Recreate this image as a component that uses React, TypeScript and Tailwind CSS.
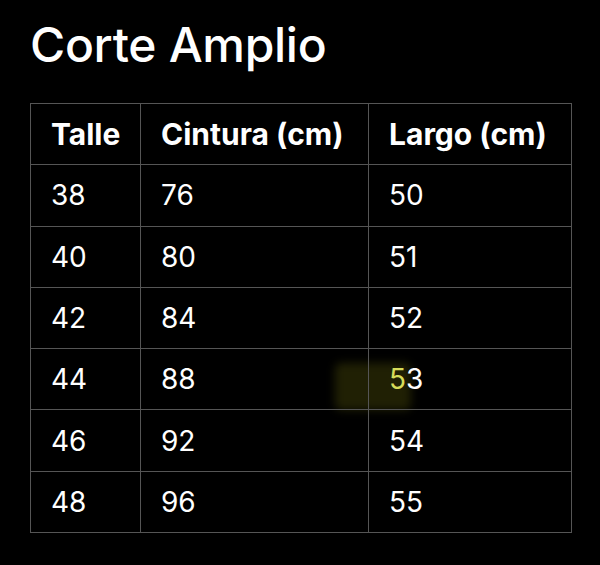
const ROWS: [string, string, string][] = [
  ['38', '76', '50'],
  ['40', '80', '51'],
  ['42', '84', '52'],
  ['44', '88', '53'],
  ['46', '92', '54'],
  ['48', '96', '55'],
]

const cell = 'border border-[#555555] pl-[20px] h-[61.3px] align-middle text-left'

export default function App() {
  return (
    <div
      className="min-h-screen bg-black px-[30px] pt-[21px] text-white"
      style={{ fontFamily: 'Inter, "Liberation Sans", sans-serif' }}
    >
      <h1 className="text-[48px] leading-none font-medium tracking-[-0.3px]">Corte Amplio</h1>
      <div className="relative mt-[34px] w-[541px]">
        <div className="absolute left-[305px] top-[260px] w-[76px] h-[47px] rounded-[6px] bg-[#202004] blur-[4px]" />
        <table className="relative w-[541px] table-fixed border-collapse text-[28px]">
          <colgroup>
            <col className="w-[110px]" />
            <col className="w-[228px]" />
            <col className="w-[203px]" />
          </colgroup>
          <thead>
            <tr>
              <th className={`${cell} text-[30px] font-bold`}>Talle</th>
              <th className={`${cell} text-[30px] font-bold`}>Cintura (cm)</th>
              <th className={`${cell} text-[30px] font-bold`}>Largo (cm)</th>
            </tr>
          </thead>
          <tbody>
            {ROWS.map(([talle, cintura, largo]) => (
              <tr key={talle}>
                <td className={cell}>{talle}</td>
                <td className={cell}>{cintura}</td>
                <td className={cell}>
                  {largo === '53' ? (
                    <>
                      <span className="text-[#d6dc5a]">5</span>3
                    </>
                  ) : (
                    largo
                  )}
                </td>
              </tr>
            ))}
          </tbody>
        </table>
      </div>
    </div>
  )
}
